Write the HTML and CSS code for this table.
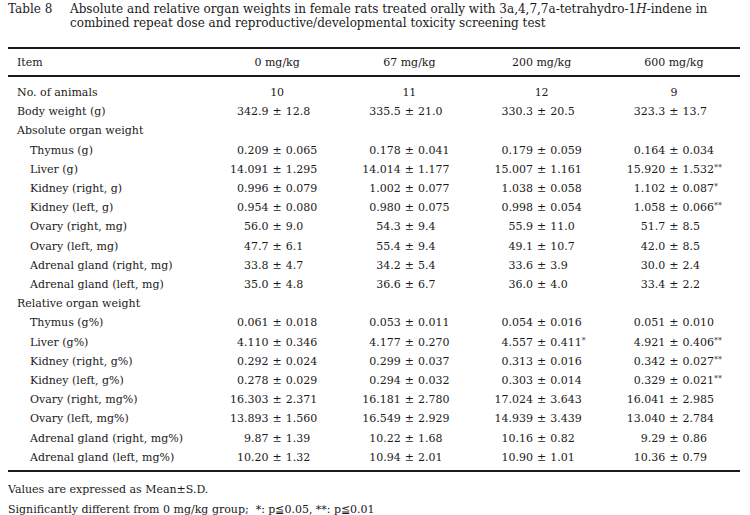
FILE: index.html
```html
<!DOCTYPE html>
<html>
<head>
<meta charset="utf-8">
<link rel="stylesheet" href="styles.css">
</head>
<body>
<div class="caption">
  <div class="cap-num">Table 8</div>
  <div class="cap-text"><span class="cap-line">Absolute and relative organ weights in female rats treated orally with 3a,4,7,7a-tetrahydro-1<i>H</i>-indene in</span><span class="cap-line">combined repeat dose and reproductive/developmental toxicity screening test</span></div>
</div>
<table class="data">
  <thead>
    <tr><th class="lbl">Item</th><th>0 mg/kg</th><th>67 mg/kg</th><th>200 mg/kg</th><th>600 mg/kg</th></tr>
  </thead>
  <tbody>
    <tr class="first"><td class="lbl">No. of animals</td><td class="n">10</td><td class="n">11</td><td class="n">12</td><td class="n">9</td></tr>
    <tr><td class="lbl">Body weight (g)</td>
      <td><span class="v"><span class="m">342.9</span><span class="pm">±</span><span class="s">12.8</span></span></td>
      <td><span class="v"><span class="m">335.5</span><span class="pm">±</span><span class="s">21.0</span></span></td>
      <td><span class="v"><span class="m">330.3</span><span class="pm">±</span><span class="s">20.5</span></span></td>
      <td><span class="v"><span class="m">323.3</span><span class="pm">±</span><span class="s">13.7</span></span></td></tr>
    <tr><td class="lbl" colspan="5">Absolute organ weight</td></tr>
    <tr><td class="lbl sub">Thymus (g)</td>
      <td><span class="v"><span class="m">0.209</span><span class="pm">±</span><span class="s">0.065</span></span></td>
      <td><span class="v"><span class="m">0.178</span><span class="pm">±</span><span class="s">0.041</span></span></td>
      <td><span class="v"><span class="m">0.179</span><span class="pm">±</span><span class="s">0.059</span></span></td>
      <td><span class="v"><span class="m">0.164</span><span class="pm">±</span><span class="s">0.034</span></span></td></tr>
    <tr><td class="lbl sub">Liver (g)</td>
      <td><span class="v"><span class="m">14.091</span><span class="pm">±</span><span class="s">1.295</span></span></td>
      <td><span class="v"><span class="m">14.014</span><span class="pm">±</span><span class="s">1.177</span></span></td>
      <td><span class="v"><span class="m">15.007</span><span class="pm">±</span><span class="s">1.161</span></span></td>
      <td><span class="v"><span class="m">15.920</span><span class="pm">±</span><span class="s">1.532<sup class="sig">**</sup></span></span></td></tr>
    <tr><td class="lbl sub">Kidney (right, g)</td>
      <td><span class="v"><span class="m">0.996</span><span class="pm">±</span><span class="s">0.079</span></span></td>
      <td><span class="v"><span class="m">1.002</span><span class="pm">±</span><span class="s">0.077</span></span></td>
      <td><span class="v"><span class="m">1.038</span><span class="pm">±</span><span class="s">0.058</span></span></td>
      <td><span class="v"><span class="m">1.102</span><span class="pm">±</span><span class="s">0.087<sup class="sig">*</sup></span></span></td></tr>
    <tr><td class="lbl sub">Kidney (left, g)</td>
      <td><span class="v"><span class="m">0.954</span><span class="pm">±</span><span class="s">0.080</span></span></td>
      <td><span class="v"><span class="m">0.980</span><span class="pm">±</span><span class="s">0.075</span></span></td>
      <td><span class="v"><span class="m">0.998</span><span class="pm">±</span><span class="s">0.054</span></span></td>
      <td><span class="v"><span class="m">1.058</span><span class="pm">±</span><span class="s">0.066<sup class="sig">**</sup></span></span></td></tr>
    <tr><td class="lbl sub">Ovary (right, mg)</td>
      <td><span class="v"><span class="m">56.0</span><span class="pm">±</span><span class="s">9.0</span></span></td>
      <td><span class="v"><span class="m">54.3</span><span class="pm">±</span><span class="s">9.4</span></span></td>
      <td><span class="v"><span class="m">55.9</span><span class="pm">±</span><span class="s">11.0</span></span></td>
      <td><span class="v"><span class="m">51.7</span><span class="pm">±</span><span class="s">8.5</span></span></td></tr>
    <tr><td class="lbl sub">Ovary (left, mg)</td>
      <td><span class="v"><span class="m">47.7</span><span class="pm">±</span><span class="s">6.1</span></span></td>
      <td><span class="v"><span class="m">55.4</span><span class="pm">±</span><span class="s">9.4</span></span></td>
      <td><span class="v"><span class="m">49.1</span><span class="pm">±</span><span class="s">10.7</span></span></td>
      <td><span class="v"><span class="m">42.0</span><span class="pm">±</span><span class="s">8.5</span></span></td></tr>
    <tr><td class="lbl sub">Adrenal gland (right, mg)</td>
      <td><span class="v"><span class="m">33.8</span><span class="pm">±</span><span class="s">4.7</span></span></td>
      <td><span class="v"><span class="m">34.2</span><span class="pm">±</span><span class="s">5.4</span></span></td>
      <td><span class="v"><span class="m">33.6</span><span class="pm">±</span><span class="s">3.9</span></span></td>
      <td><span class="v"><span class="m">30.0</span><span class="pm">±</span><span class="s">2.4</span></span></td></tr>
    <tr><td class="lbl sub">Adrenal gland (left, mg)</td>
      <td><span class="v"><span class="m">35.0</span><span class="pm">±</span><span class="s">4.8</span></span></td>
      <td><span class="v"><span class="m">36.6</span><span class="pm">±</span><span class="s">6.7</span></span></td>
      <td><span class="v"><span class="m">36.0</span><span class="pm">±</span><span class="s">4.0</span></span></td>
      <td><span class="v"><span class="m">33.4</span><span class="pm">±</span><span class="s">2.2</span></span></td></tr>
    <tr><td class="lbl" colspan="5">Relative organ weight</td></tr>
    <tr><td class="lbl sub">Thymus (g%)</td>
      <td><span class="v"><span class="m">0.061</span><span class="pm">±</span><span class="s">0.018</span></span></td>
      <td><span class="v"><span class="m">0.053</span><span class="pm">±</span><span class="s">0.011</span></span></td>
      <td><span class="v"><span class="m">0.054</span><span class="pm">±</span><span class="s">0.016</span></span></td>
      <td><span class="v"><span class="m">0.051</span><span class="pm">±</span><span class="s">0.010</span></span></td></tr>
    <tr><td class="lbl sub">Liver (g%)</td>
      <td><span class="v"><span class="m">4.110</span><span class="pm">±</span><span class="s">0.346</span></span></td>
      <td><span class="v"><span class="m">4.177</span><span class="pm">±</span><span class="s">0.270</span></span></td>
      <td><span class="v"><span class="m">4.557</span><span class="pm">±</span><span class="s">0.411<sup class="sig">*</sup></span></span></td>
      <td><span class="v"><span class="m">4.921</span><span class="pm">±</span><span class="s">0.406<sup class="sig">**</sup></span></span></td></tr>
    <tr><td class="lbl sub">Kidney (right, g%)</td>
      <td><span class="v"><span class="m">0.292</span><span class="pm">±</span><span class="s">0.024</span></span></td>
      <td><span class="v"><span class="m">0.299</span><span class="pm">±</span><span class="s">0.037</span></span></td>
      <td><span class="v"><span class="m">0.313</span><span class="pm">±</span><span class="s">0.016</span></span></td>
      <td><span class="v"><span class="m">0.342</span><span class="pm">±</span><span class="s">0.027<sup class="sig">**</sup></span></span></td></tr>
    <tr><td class="lbl sub">Kidney (left, g%)</td>
      <td><span class="v"><span class="m">0.278</span><span class="pm">±</span><span class="s">0.029</span></span></td>
      <td><span class="v"><span class="m">0.294</span><span class="pm">±</span><span class="s">0.032</span></span></td>
      <td><span class="v"><span class="m">0.303</span><span class="pm">±</span><span class="s">0.014</span></span></td>
      <td><span class="v"><span class="m">0.329</span><span class="pm">±</span><span class="s">0.021<sup class="sig">**</sup></span></span></td></tr>
    <tr><td class="lbl sub">Ovary (right, mg%)</td>
      <td><span class="v"><span class="m">16.303</span><span class="pm">±</span><span class="s">2.371</span></span></td>
      <td><span class="v"><span class="m">16.181</span><span class="pm">±</span><span class="s">2.780</span></span></td>
      <td><span class="v"><span class="m">17.024</span><span class="pm">±</span><span class="s">3.643</span></span></td>
      <td><span class="v"><span class="m">16.041</span><span class="pm">±</span><span class="s">2.985</span></span></td></tr>
    <tr><td class="lbl sub">Ovary (left, mg%)</td>
      <td><span class="v"><span class="m">13.893</span><span class="pm">±</span><span class="s">1.560</span></span></td>
      <td><span class="v"><span class="m">16.549</span><span class="pm">±</span><span class="s">2.929</span></span></td>
      <td><span class="v"><span class="m">14.939</span><span class="pm">±</span><span class="s">3.439</span></span></td>
      <td><span class="v"><span class="m">13.040</span><span class="pm">±</span><span class="s">2.784</span></span></td></tr>
    <tr><td class="lbl sub">Adrenal gland (right, mg%)</td>
      <td><span class="v"><span class="m">9.87</span><span class="pm">±</span><span class="s">1.39</span></span></td>
      <td><span class="v"><span class="m">10.22</span><span class="pm">±</span><span class="s">1.68</span></span></td>
      <td><span class="v"><span class="m">10.16</span><span class="pm">±</span><span class="s">0.82</span></span></td>
      <td><span class="v"><span class="m">9.29</span><span class="pm">±</span><span class="s">0.86</span></span></td></tr>
    <tr class="last"><td class="lbl sub">Adrenal gland (left, mg%)</td>
      <td><span class="v"><span class="m">10.20</span><span class="pm">±</span><span class="s">1.32</span></span></td>
      <td><span class="v"><span class="m">10.94</span><span class="pm">±</span><span class="s">2.01</span></span></td>
      <td><span class="v"><span class="m">10.90</span><span class="pm">±</span><span class="s">1.01</span></span></td>
      <td><span class="v"><span class="m">10.36</span><span class="pm">±</span><span class="s">0.79</span></span></td></tr>
  </tbody>
</table>
<div class="notes">
  <p>Values are expressed as Mean±S.D.</p>
  <p>Significantly different from 0 mg/kg group; &nbsp;*: p≦0.05, **: p≦0.01</p>
</div>
</body>
</html>
```
FILE: styles.css
```css
html, body {
  margin: 0;
  padding: 0;
  background: #fff;
}
body {
  font-family: "DejaVu Serif", "Liberation Serif", serif;
  font-size: 11px;
  color: #1a1a1a;
  width: 750px;
}
.caption {
  display: flex;
  padding: 2px 10px 0 8px;
  line-height: 14px;
  font-size: 12px;
}
.cap-num {
  flex: 0 0 62px;
}
.cap-text {
  flex: 1;
  display: flex;
  flex-direction: column;
}
.cap-line {
  display: block;
  white-space: nowrap;
}
.data {
  margin: 17px 0 0 8px;
  width: 732px;
  border-collapse: collapse;
  table-layout: fixed;
}
.data th {
  font-weight: normal;
  text-align: center;
  height: 26px;
  padding: 0;
  border-top: 2px solid #1a1a1a;
  border-bottom: 2px solid #1a1a1a;
}
.data th:first-child { width: 194px; }
.data th.lbl { text-align: left; padding-left: 9px; }
.data td {
  padding: 0;
  height: 19.2px;
  line-height: 19.2px;
  white-space: nowrap;
}
.data tr.first td { padding-top: 6px; }
.data tr.last td { padding-bottom: 3px; border-bottom: 2px solid #1a1a1a; }
.data td.lbl { padding-left: 9px; }
.data td.sub { padding-left: 22px; }
.data td.n { text-align: center; }
.v {
  display: grid;
  grid-template-columns: minmax(0, 1fr) auto minmax(0, 1fr);
  column-gap: 4px;
}
.m { text-align: right; }
.pm { text-align: center; }
.s { text-align: left; }
.sig {
  font-size: 8px;
  line-height: 0;
  vertical-align: 3px;
}
.notes {
  padding: 8px 0 0 8px;
  line-height: 20px;
}
.notes p { margin: 0; }
```
